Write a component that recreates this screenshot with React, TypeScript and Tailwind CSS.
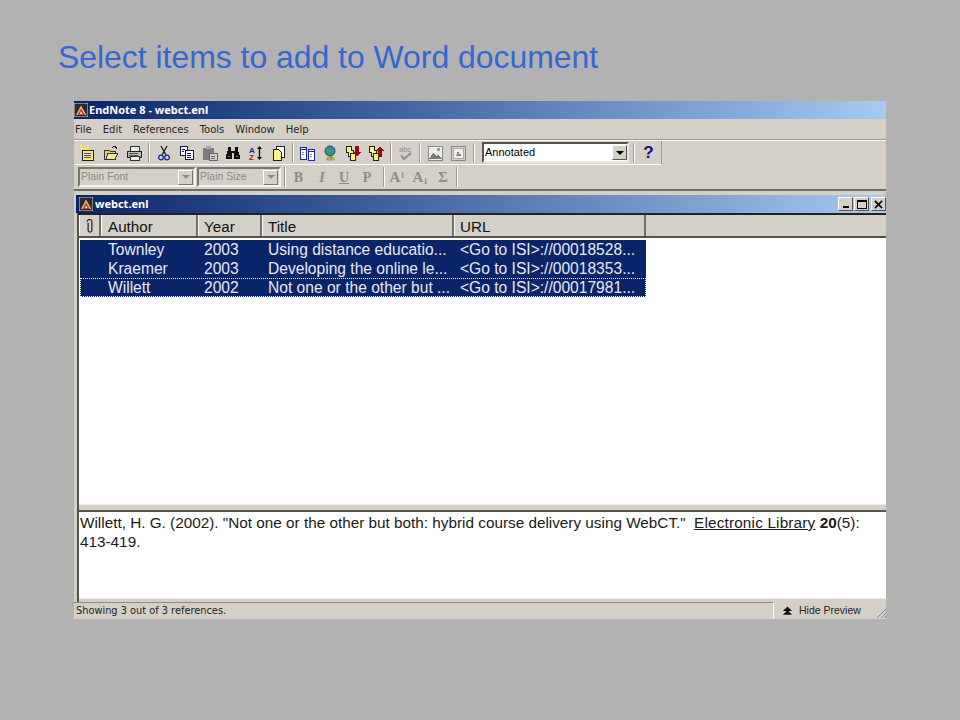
import type { ReactNode } from "react";

const sans = "font-['Liberation_Sans',Arial,sans-serif]";
const ui = "font-['DejaVu_Sans',Verdana,sans-serif]";
const caption = "font-['Noto_Sans',Tahoma,sans-serif]";

const Logo = () => (
  <svg viewBox="0 0 14 14" className="w-[14px] h-[14px] shrink-0">
    <rect width="14" height="14" fill="#2a2a2a" stroke="#d8d8d8" strokeWidth="1" />
    <path d="M2 12 L7 2.500 L12.500 12 Z" fill="#e8b090" />
    <path d="M3.500 12 L7 5.500 L11 12 Z" fill="#c8401c" />
    <path d="M6 11 L7 8.500 L8.500 11 Z" fill="#fff" />
  </svg>
);

const Icon = ({ children }: { children: ReactNode }) => (
  <svg viewBox="0 0 16 16" className="w-4 h-4" shapeRendering="crispEdges">
    {children}
  </svg>
);

const Slot = ({ w, children }: { w: string; children?: ReactNode }) => (
  <div className={"flex items-center justify-center h-full " + w}>{children}</div>
);

const Sep = ({ w }: { w: string }) => (
  <div className={"flex justify-center h-full py-[2px] " + w}>
    <div className="w-[2px] border-l border-l-[#9a9890] border-r border-r-white" />
  </div>
);

const Combo = ({ label, w }: { label: string; w: string }) => (
  <div className={"h-5 flex items-center border-2 border-t-[#77756f] border-l-[#77756f] border-b-[#f4f3f0] border-r-[#f4f3f0] " + w}>
    <span className={"flex-1 pl-[1px] text-[10.5px] text-[#8e8c86] " + sans}>{label}</span>
    <div className="w-[15px] h-[15px] mr-[1px] flex items-center justify-center bg-[#d4d0c8] border border-t-white border-l-white border-b-[#77756f] border-r-[#77756f]">
      <div className="w-0 h-0 border-x-[4px] border-x-transparent border-t-[4px] border-t-[#8e8c86]" />
    </div>
  </div>
);

const Header = ({ w, children }: { w: string; children?: ReactNode }) => (
  <div className={"h-full flex items-center pt-[3px] border-r-2 border-r-[#6f6d68] border-l border-l-white pl-[5px] text-[15.2px] text-[#111] " + w}>
    {children}
  </div>
);

const refs = [
  ["Townley", "2003", "Using distance educatio...", "<Go to ISI>://00018528..."],
  ["Kraemer", "2003", "Developing the online le...", "<Go to ISI>://00018353..."],
  ["Willett", "2002", "Not one or the other but ...", "<Go to ISI>://00017981..."],
];

const WinButton = ({ children }: { children: ReactNode }) => (
  <div className="w-[15px] h-[14px] flex items-center justify-center bg-[#d4d0c8] border border-t-white border-l-white border-b-[#555] border-r-[#555]">
    {children}
  </div>
);

const App = () => {
  return (
    <div className={"w-[960px] h-[720px] bg-[#b2b2b2] overflow-hidden " + sans}>
      <h1 className="pl-[58px] pt-[38px] h-[101px] text-[31.9px] leading-[38px] text-[#3268d0]">
        Select items to add to Word document
      </h1>

      <div className="ml-[74px] w-[812px] h-[518px] flex flex-col bg-[#d4d0c8]">
        {/* app title bar */}
        <div className="h-[18px] shrink-0 flex items-center gap-[1px] bg-gradient-to-r from-[#0a246a] to-[#a6caf0]">
          <Logo />
          <span className={"text-[11px] font-bold text-white " + caption}>EndNote 8 - webct.enl</span>
        </div>

        {/* menu */}
        <div className={"h-[21px] shrink-0 flex items-center gap-[11px] pl-[1px] text-[10px] text-[#222] border-b border-b-[#9a9890] " + ui}>
          <span>File</span>
          <span>Edit</span>
          <span>References</span>
          <span>Tools</span>
          <span>Window</span>
          <span>Help</span>
        </div>

        {/* main toolbar */}
        <div className="h-[25px] shrink-0 flex items-center pl-[1px] border-t border-t-white">
          <div className="h-full flex items-center w-[587px] border-b border-b-white border-r border-r-[#9a9890]">
            <Slot w="w-[24px]">
              <Icon>
                <path d="M3 5h11v10H3z" fill="#f4e98a" stroke="#222" />
                <path d="M5 8h7M5 10h7M5 12h7" stroke="#555" />
                <path d="M1 0l3 3h3l3-3v5H2z" fill="#ffe830" />
              </Icon>
            </Slot>
            <Slot w="w-[23px]">
              <Icon>
                <path d="M1 5h5l1 1h5v8H1z" fill="#e8d068" stroke="#333" />
                <path d="M3 14l2-6h10l-3 6z" fill="#f4e890" stroke="#333" />
                <path d="M9 3l2-2 3 2-1 1" fill="none" stroke="#111" />
              </Icon>
            </Slot>
            <Slot w="w-[23px]">
              <Icon>
                <path d="M4 1h9v5H4z" fill="#eee" stroke="#333" />
                <path d="M1 6h14v6H1z" fill="#bbb" stroke="#222" />
                <path d="M4 11h9v4H4z" fill="#eee" stroke="#333" />
                <path d="M3 8h9M3 10h9" stroke="#555" />
              </Icon>
            </Slot>
            <Sep w="w-[7px]" />
            <Slot w="w-[23px]">
              <svg viewBox="0 0 16 16" className="w-4 h-4">
                <path d="M5 1l5 9M11 1L6 10" stroke="#111" strokeWidth="1.2" fill="none" />
                <circle cx="5" cy="12.5" r="2.3" fill="none" stroke="#1a2a9a" strokeWidth="1.3" />
                <circle cx="11" cy="12.5" r="2.3" fill="none" stroke="#1a2a9a" strokeWidth="1.3" />
              </svg>
            </Slot>
            <Slot w="w-[23px]">
              <Icon>
                <path d="M1 1h7v9H1z" fill="#fff" stroke="#10106a" />
                <path d="M6 5h8v9H6z" fill="#fff" stroke="#10106a" />
                <path d="M3 4h3M3 6h2M8 8h4M8 10h4M8 12h4" stroke="#10106a" />
              </Icon>
            </Slot>
            <Slot w="w-[23px]">
              <Icon>
                <path d="M1 3h11v12H1z" fill="#7c7c7c" />
                <path d="M4 1h5v3H4z" fill="#a8a8a8" />
                <path d="M7 8h8v7H7z" fill="#d4d0c8" stroke="#666" />
                <path d="M9 11h4M9 13h4" stroke="#666" />
              </Icon>
            </Slot>
            <Slot w="w-[23px]">
              <Icon>
                <path d="M3 2h3v4h4V2h3v3l2 6v3H9V8H7v6H1v-3l2-6z" fill="#111" />
                <path d="M3 11h2M11 11h2" stroke="#777" />
              </Icon>
            </Slot>
            <Slot w="w-[22px]">
              <svg viewBox="0 0 16 16" className="w-4 h-4">
                <text x="2" y="7.5" fontSize="8" fontWeight="700" fill="#1c1c9c" fontFamily="Liberation Sans">A</text>
                <text x="2" y="15" fontSize="8" fontWeight="700" fill="#b01818" fontFamily="Liberation Sans">Z</text>
                <path d="M12.5 1l2.5 3h-5zM12.5 15l2.5-3h-5zM11.8 4h1.4v8h-1.4z" fill="#111" />
              </svg>
            </Slot>
            <Slot w="w-[23px]">
              <Icon>
                <path d="M6 1h8v11H6z" fill="#fff" stroke="#222" />
                <path d="M3 4h5l3 3v8H3z" fill="#fff090" stroke="#222" />
              </Icon>
            </Slot>
            <Sep w="w-[7px]" />
            <Slot w="w-[22px]">
              <Icon>
                <path d="M1 2h6v12H1zM9 4h6v11H9z" fill="#fff" stroke="#1c2a9c" />
                <path d="M1 4h6M9 6h6" stroke="#1c2a9c" />
                <path d="M3 7h2M3 9h2M11 9h2M11 11h2" stroke="#7b84c8" />
              </Icon>
            </Slot>
            <Slot w="w-[23px]">
              <svg viewBox="0 0 16 16" className="w-4 h-4">
                <circle cx="8" cy="6" r="5" fill="#2a8fa8" stroke="#1d4a6a" />
                <path d="M5 3l3 1-1 3-3 0zM9 6l3-1 0 3-2 1z" fill="#4f9a44" />
                <path d="M5 13h7v2H5zM8 11h1.500v2H8z" fill="#e0c850" stroke="#6a5a10" strokeWidth=".5" />
              </svg>
            </Slot>
            <Slot w="w-[23px]">
              <Icon>
                <path d="M1 1h5v4h2v6H3V7H1z" fill="#fff080" stroke="#222" />
                <path d="M5 8h5v7H5z" fill="#fff080" stroke="#222" />
                <path d="M10 1h4v6h2l-4 5-4-5h2z" fill="#8a1010" />
              </Icon>
            </Slot>
            <Slot w="w-[23px]">
              <Icon>
                <path d="M1 1h5v4h2v6H3V7H1z" fill="#fff080" stroke="#222" />
                <path d="M5 8h5v7H5z" fill="#fff080" stroke="#222" />
                <path d="M12 1l4 5h-2v6h-4V6H8z" fill="#8a1010" />
              </Icon>
            </Slot>
            <Sep w="w-[8px]" />
            <Slot w="w-[21px]">
              <svg viewBox="0 0 16 16" className="w-4 h-4">
                <text x="1" y="7" fontSize="7.5" fill="#8e8c86" fontFamily="Liberation Sans">abc</text>
                <path d="M3 10l3 4 7-6" fill="none" stroke="#8e8c86" strokeWidth="2" />
              </svg>
            </Slot>
            <Sep w="w-[7px]" />
            <Slot w="w-[23px]">
              <Icon>
                <path d="M1 1h14v14H1z" fill="#eeeeea" stroke="#888" />
                <path d="M2 14l4-6 3 3 2-2 4 5z" fill="#777" />
                <path d="M10 3h3v3h-3z" fill="#999" />
              </Icon>
            </Slot>
            <Slot w="w-[23px]">
              <Icon>
                <path d="M1 1h14v14H1z" fill="#d4d0c8" stroke="#888" />
                <path d="M3 3h10v10H3z" fill="#eeeeea" stroke="#aaa" />
                <path d="M5 11l2-2V7h2v2h2v2z" fill="#888" />
              </Icon>
            </Slot>
            <Sep w="w-[9px]" />
            <div className="ml-[4px] w-[147px] h-[21px] flex items-center bg-white border-2 border-t-[#555] border-l-[#555] border-b-[#e8e6e0] border-r-[#e8e6e0]">
              <span className={"flex-1 pl-[1px] text-[11px] text-black " + sans}>Annotated</span>
              <div className="w-[15px] h-[15px] flex items-center justify-center bg-[#d4d0c8] border border-t-white border-l-white border-b-[#555] border-r-[#555]">
                <div className="w-0 h-0 border-x-[4px] border-x-transparent border-t-[4px] border-t-black" />
              </div>
            </div>
            <Sep w="w-[9px]" />
            <span className="w-[21px] text-center text-[17px] font-bold leading-none text-[#10107a]">?</span>
          </div>
        </div>

        {/* format toolbar */}
        <div className="h-[26px] shrink-0 flex items-center pl-[4px] border-b-2 border-b-[#6f6d68]">
          <Combo label="Plain Font" w="w-[118px]" />
          <Combo label="Plain Size" w="w-[84px] ml-[1px]" />
          <Sep w="w-[7px]" />
          {[
            ["w-[21px]", "B", "font-bold"],
            ["w-[26px]", "I", "italic font-bold"],
            ["w-[18px]", "U", "font-bold underline"],
            ["w-[28px]", "P", "font-bold"],
          ].map(([w, t, c]) => (
            <Slot key={t} w={w}>
              <span className={"text-[14px] text-[#8e8c86] font-['Liberation_Serif',serif] " + c}>{t}</span>
            </Slot>
          ))}
          <Sep w="w-[5px]" />
          <Slot w="w-[22px]">
            <span className="text-[15px] font-bold text-[#8e8c86] font-['Liberation_Serif',serif]">
              A<sup className="text-[8px]">1</sup>
            </span>
          </Slot>
          <Slot w="w-[24px]">
            <span className="text-[15px] font-bold text-[#8e8c86] font-['Liberation_Serif',serif]">
              A<sub className="text-[8px]">1</sub>
            </span>
          </Slot>
          <Slot w="w-[22px]">
            <span className="text-[15px] font-bold text-[#8e8c86] font-['Liberation_Serif',serif]">Σ</span>
          </Slot>
          <Sep w="w-[5px]" />
        </div>

        {/* document window */}
        <div className="flex-1 min-h-0 flex flex-col pl-[2px] pt-[4px]">
          <div className="h-[18px] shrink-0 flex items-center gap-[2px] pl-[3px] bg-gradient-to-r from-[#0a246a] to-[#a6caf0]">
            <Logo />
            <span className={"flex-1 text-[11px] font-bold text-white " + caption}>webct.enl</span>
            <div className="flex items-center">
              <WinButton>
                <div className="w-[6px] h-[2px] bg-black mt-[6px]" />
              </WinButton>
              <div className="ml-[1px]">
                <WinButton>
                  <div className="w-[10px] h-[9px] border border-black border-t-2" />
                </WinButton>
              </div>
              <div className="ml-[2px]">
                <WinButton>
                  <svg viewBox="0 0 10 10" className="w-[9px] h-[9px]">
                    <path d="M1 1l8 8M9 1l-8 8" stroke="#000" strokeWidth="1.8" />
                  </svg>
                </WinButton>
              </div>
            </div>
          </div>

          <div className="flex-1 min-h-0 flex flex-col ml-[1px] border-l-2 border-l-[#55534e] border-t-2 border-t-[#222]">
            <div className="h-[23px] shrink-0 flex items-stretch border-b-2 border-b-[#55534e] bg-[#d4d0c8]">
              <Header w="w-[22px]">
                <svg viewBox="0 0 10 16" className="w-[10px] h-[15px] -mt-[1px]">
                  <path d="M3 4v8a2 2 0 0 0 4 0V3a2.500 2.500 0 0 0-5 0" fill="none" stroke="#222" strokeWidth="1.300" />
                </svg>
              </Header>
              <Header w="w-[97px]">
                <span className="ml-[1px]">Author</span>
              </Header>
              <Header w="w-[64px]">Year</Header>
              <Header w="w-[192px]">Title</Header>
              <Header w="w-[192px]">URL</Header>
            </div>

            <div className="flex-1 min-h-0 bg-white pt-[2px] pl-[1px]">
              <div className="w-[566px]">
                {refs.map((r, i) => (
                  <div
                    key={r[0]}
                    className={
                      "h-[19px] flex items-center bg-[#0a246a] text-[15.6px] text-[#e6e9f2] " +
                      (i === 2 ? "border border-dotted border-white" : "")
                    }
                  >
                    <span className={"shrink-0 " + (i === 2 ? "w-[27px]" : "w-[28px]")} />
                    <span className="w-[96px] shrink-0">{r[0]}</span>
                    <span className="w-[64px] shrink-0">{r[1]}</span>
                    <span className="w-[192px] shrink-0">{r[2]}</span>
                    <span className="shrink-0 whitespace-nowrap">{r[3]}</span>
                  </div>
                ))}
              </div>
            </div>

            <div className="h-[6px] shrink-0 bg-[#d4d0c8] border-t border-t-[#f0efec]" />

            <div className="h-[88px] shrink-0 bg-white border-t-2 border-t-[#55534e] px-[1px] pt-[1px] text-[15.3px] leading-[19px] text-[#1a1a1a]">
              Willett, H. G. (2002). "Not one or the other but both: hybrid course delivery using WebCT."{" "}
              <span className="ml-[4px] underline tracking-[0.18px]">Electronic Library</span> <b>20</b>(5):{" "}
              <span className="whitespace-nowrap">413-419.</span>
            </div>

            <div className="h-[4px] shrink-0 bg-[#d4d0c8] border-t border-t-[#f0efec]" />
          </div>

          <div className="h-[17px] shrink-0 -ml-[2px] flex items-center bg-[#d4d0c8]">
            <div className={"w-[700px] h-full flex items-center pl-[2px] border-t border-t-[#8a8880] border-r border-r-white text-[9.8px] text-[#222] " + ui}>
              Showing 3 out of 3 references.
            </div>
            <div className={"flex-1 flex items-center gap-[6px] pl-[8px] text-[10.5px] text-[#222] " + sans}>
              <svg viewBox="0 0 12 10" className="w-[11px] h-[10px]">
                <path d="M6 0l5 5H1zM6 4l5 5H1z" fill="#111" />
              </svg>
              Hide Preview
            </div>
            <svg viewBox="0 0 10 10" className="w-[10px] h-[10px] self-end mb-[1px]">
              <path d="M1 10l9-9M5 10l5-5M8 10l2-2" stroke="#888" />
            </svg>
          </div>
        </div>
      </div>
    </div>
  );
};

export default App;
